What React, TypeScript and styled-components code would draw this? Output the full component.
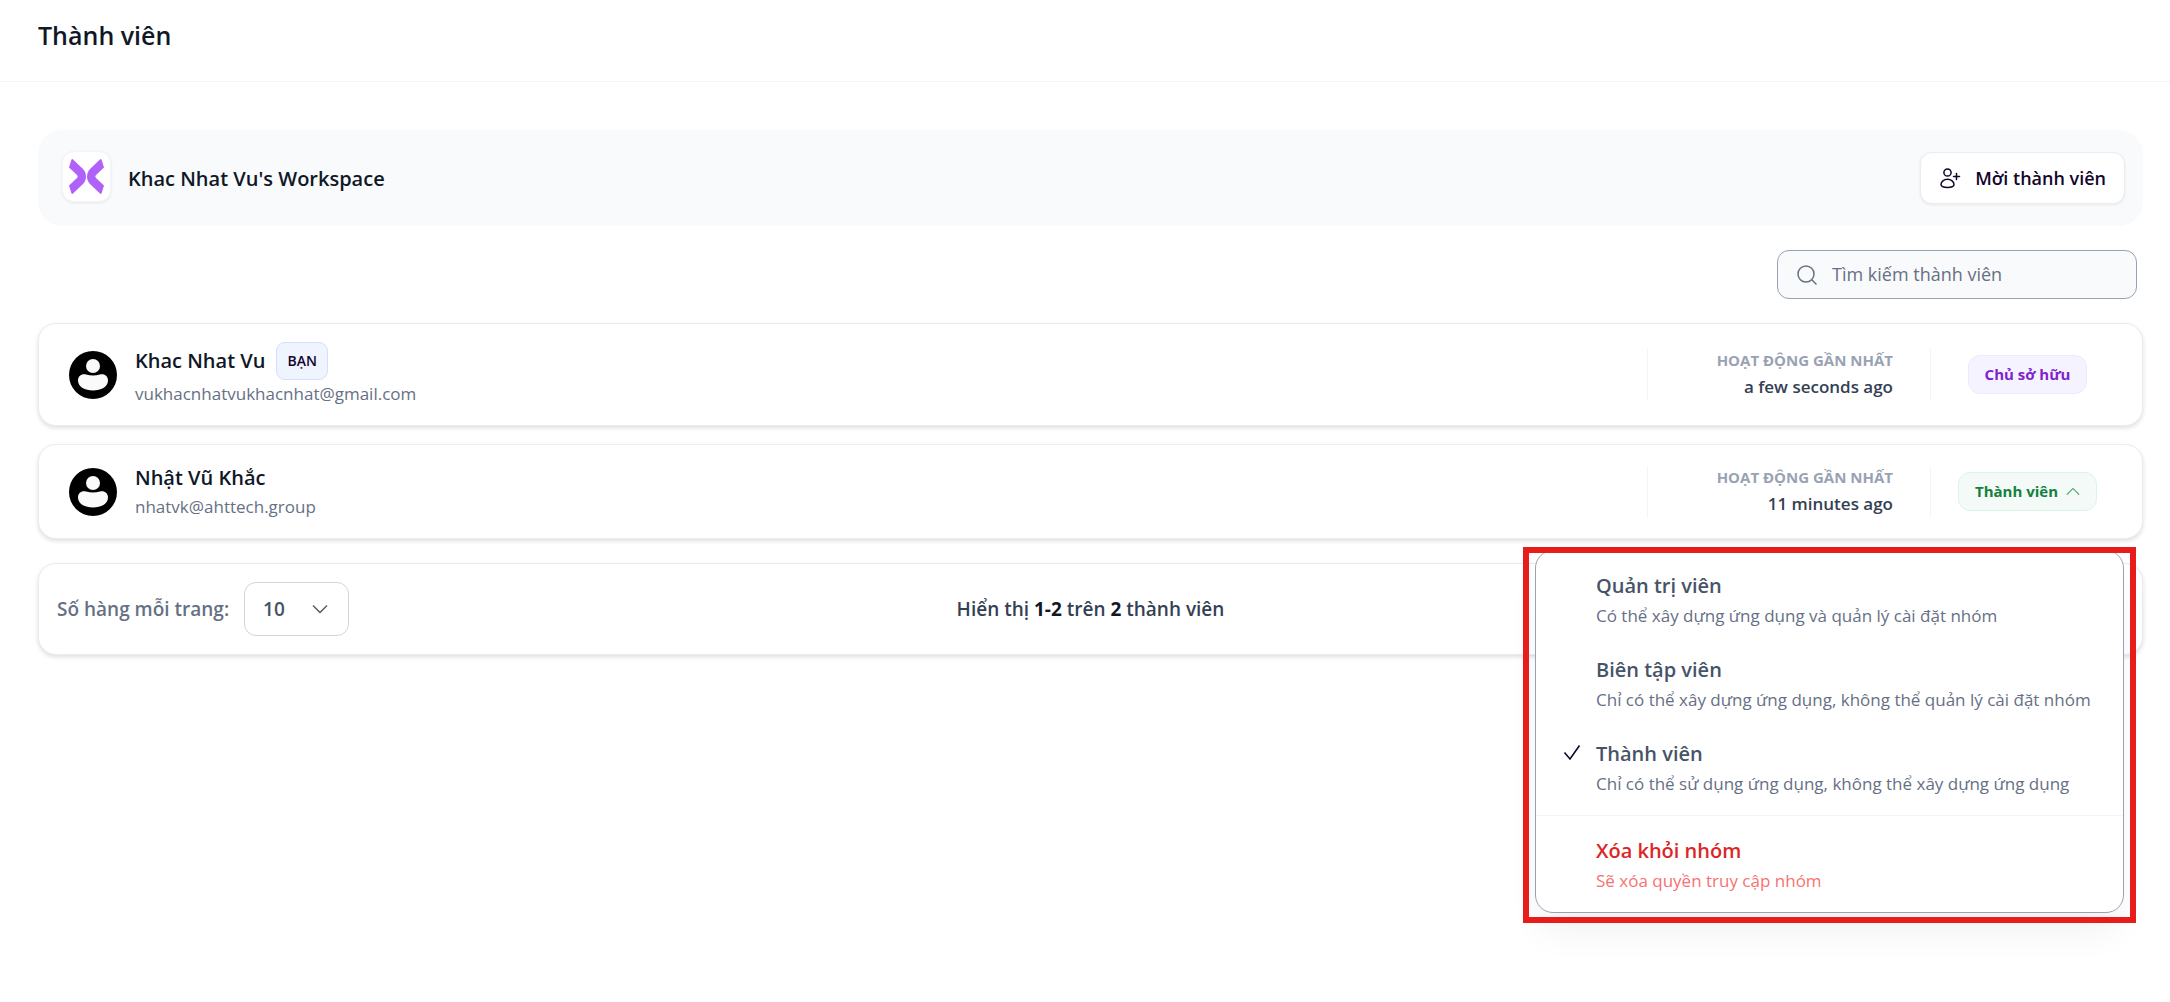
import React from 'react';
import styled, { createGlobalStyle, css } from 'styled-components';

const GlobalStyle = createGlobalStyle`
  *, *::before, *::after { box-sizing: border-box; }
  body {
    margin: 0;
    background: #ffffff;
    color: #101828;
    font-family: 'Open Sans', 'Noto Sans', sans-serif;
    font-size: 17px;
    line-height: 27px;
  }
  button, input, select { font: inherit; color: inherit; margin: 0; }
  h1, h2, p, ul { margin: 0; padding: 0; }
`;

const Page = styled.div`
  min-height: 100vh;
`;

const Header = styled.header`
  padding: 17px 38px 28px;
  border-bottom: 1px solid #f2f4f7;
`;

const Title = styled.h1`
  font-size: 25px;
  line-height: 36px;
  font-weight: 600;
`;

const Main = styled.main`
  padding: 48px 27px 48px 38px;
`;

const Banner = styled.section`
  display: flex;
  align-items: center;
  gap: 17px;
  height: 96px;
  padding: 0 18px 0 24px;
  border-radius: 24px;
  background: #f9fafb;
`;

const LogoBox = styled.span`
  display: flex;
  align-items: center;
  justify-content: center;
  width: 49px;
  height: 51px;
  margin-bottom: 4px;
  border: 1px solid #f2f4f7;
  border-radius: 12px;
  background: #ffffff;
  box-shadow: 0 1px 3px rgba(16, 24, 40, 0.08);
`;

const WorkspaceName = styled.h2`
  flex: 1;
  padding-top: 2px;
  font-size: 20px;
  line-height: 30px;
  font-weight: 600;
`;

const InviteButton = styled.button`
  display: flex;
  align-items: center;
  gap: 14px;
  height: 52px;
  padding: 0 18px;
  border: 1px solid #eaecf0;
  border-radius: 12px;
  background: #ffffff;
  box-shadow: 0 1px 3px rgba(16, 24, 40, 0.08);
  color: #14042b;
  font-size: 18px;
  font-weight: 600;
`;

const SearchLabel = styled.label`
  display: flex;
  align-items: center;
  gap: 14px;
  width: 360px;
  height: 49px;
  margin: 24px 6px 24px auto;
  padding: 0 18px;
  border: 1px solid #98a2b3;
  border-radius: 12px;
  background: #f9fafb;
  color: #667085;
`;

const SearchInput = styled.input`
  flex: 1;
  min-width: 0;
  padding: 0;
  border: 0;
  outline: 0;
  background: transparent;
  font-size: 18px;
  &::placeholder { color: #667085; opacity: 1; }
`;

const cardSurface = css`
  border: 1px solid #eaecf0;
  border-radius: 18px;
  background: #ffffff;
  box-shadow: 0 2px 4px rgba(16, 24, 40, 0.14);
`;

const MemberList = styled.ul`
  display: flex;
  flex-direction: column;
  gap: 18px;
  list-style: none;
`;

const MemberCard = styled.li`
  ${cardSurface}
  position: relative;
  display: flex;
  align-items: center;
  padding: 18px 18px 18px 30px;
`;

const Person = styled.div`
  flex: 1;
  padding-left: 18px;
`;

const NameLine = styled.div`
  display: flex;
  align-items: center;
  gap: 11px;
`;

const Name = styled.span`
  font-size: 20px;
  line-height: 30px;
  font-weight: 600;
`;

const YouTag = styled.span`
  height: 38px;
  padding: 0 10px;
  border: 1px solid #d1e0ff;
  border-radius: 9px;
  background: #eff4ff;
  color: #14042b;
  font-size: 14px;
  line-height: 36px;
  font-weight: 600;
`;

const Email = styled.p`
  color: #667085;
`;

const Activity = styled.div`
  width: 283px;
  height: 52px;
  padding-right: 37px;
  border-left: 1px solid #f2f4f7;
  text-align: right;
`;

const ActivityLabel = styled.p`
  color: #98a2b3;
  font-size: 15px;
  line-height: 22px;
  font-weight: 700;
  text-transform: uppercase;
`;

const ActivityTime = styled.p`
  color: #344054;
  line-height: 32px;
  font-weight: 600;
`;

const RoleCell = styled.div`
  display: flex;
  align-items: center;
  justify-content: center;
  width: 194px;
  height: 52px;
  border-left: 1px solid #f2f4f7;
`;

const rolePill = css`
  display: flex;
  align-items: center;
  gap: 8px;
  height: 39px;
  padding: 0 16px;
  border-radius: 12px;
  font-size: 15px;
  font-weight: 700;
`;

const OwnerPill = styled.span`
  ${rolePill}
  border: 1px solid #ede9fe;
  background: #f5f3ff;
  color: #7e22ce;
`;

const RoleButton = styled.button`
  ${rolePill}
  border: 1px solid #d9f5e8;
  background: #f3faf7;
  color: #15803d;
  & > svg { opacity: 0.75; }
`;

const MenuAnchor = styled.div`
  position: absolute;
  z-index: 2;
  top: calc(100% + 12px);
  right: 18px;
`;

const Menu = styled.div`
  width: 589px;
  border: 1px solid #98a2b3;
  border-radius: 18px;
  background: #ffffff;
  box-shadow: 0 24px 36px -6px rgba(16, 24, 40, 0.06);
`;

const Highlight = styled.div`
  position: absolute;
  inset: -3px -12px -10px;
  border: 6px solid #e91c1c;
  pointer-events: none;
`;

const MenuGroup = styled.div`
  padding: 8px 0 4px;
  & + & { border-top: 1px solid #f2f4f7; }
`;

const MenuItem = styled.button`
  display: grid;
  grid-template-columns: 20px 1fr;
  column-gap: 13px;
  width: 100%;
  padding: 12px 0 12px 27px;
  border: 0;
  background: transparent;
  text-align: left;
`;

const CheckSlot = styled.span`
  display: flex;
  align-items: center;
  height: 30px;
  color: #14042b;
`;

const ItemText = styled.span`
  display: flex;
  flex-direction: column;
  white-space: nowrap;
`;

const ItemTitle = styled.span<{ $danger?: boolean }>`
  color: ${(p) => (p.$danger ? '#dc2626' : '#475467')};
  font-size: 20px;
  line-height: 30px;
  font-weight: 600;
`;

const ItemDescription = styled.span<{ $danger?: boolean }>`
  color: ${(p) => (p.$danger ? '#f87171' : '#667085')};
  line-height: 30px;
`;

const Pager = styled.footer`
  ${cardSurface}
  display: grid;
  grid-template-columns: 1fr auto 1fr;
  align-items: center;
  margin-top: 24px;
  padding: 18px;
  font-size: 19px;
  font-weight: 600;
`;

const PageSize = styled.label`
  display: flex;
  align-items: center;
  gap: 15px;
  color: #667085;
`;

const SelectBox = styled.span`
  display: grid;
  align-items: center;
  color: #475467;
  & > * { grid-area: 1 / 1; }
  & > svg { justify-self: end; margin-right: 21px; pointer-events: none; }
`;

const Select = styled.select`
  width: 105px;
  height: 54px;
  padding: 0 18px;
  border: 1px solid #d0d5dd;
  border-radius: 12px;
  appearance: none;
  background: #ffffff;
`;

const Summary = styled.p`
  color: #344054;
  strong { color: #101828; font-weight: 700; }
`;

const Logo = () => (
  <svg width="35" height="35" viewBox="0 0 35 35" fill="#b061fa" aria-hidden="true">
    <path d="M3.500 0 L13.500 9.500 Q17 13 17 17.500 Q17 22 13.500 25.500 L3.500 35 L2.500 34.500 L0 26.500 L8 19 Q9.500 17.500 8 16 L0 8.500 L2.500 0.500 Z" />
    <path d="M31.500 0 L21.500 9.500 Q18 13 18 17.500 Q18 22 21.500 25.500 L31.500 35 L32.500 34.500 L35 26.500 L27 19 Q25.500 17.500 27 16 L35 8.500 L32.500 0.500 Z" />
  </svg>
);

const InviteIcon = () => (
  <svg width="22" height="22" viewBox="0 0 22 22" fill="none" stroke="currentColor" strokeWidth="1.500" strokeLinecap="round" aria-hidden="true">
    <circle cx="8.500" cy="5.500" r="3.600" />
    <path d="M8.500 12.200c-3.600 0-6.500 2.600-6.500 5.300 0 2 2.500 2.900 6.500 2.900s6.500-.9 6.500-2.900c0-2.700-2.900-5.300-6.500-5.300Z" />
    <path d="M17.500 6.500v6M14.500 9.500h6" />
  </svg>
);

const SearchIcon = () => (
  <svg width="22" height="22" viewBox="0 0 22 22" fill="none" stroke="currentColor" strokeWidth="1.500" aria-hidden="true">
    <circle cx="10" cy="10" r="8" />
    <path d="M15.800 15.800 20.500 20.500" />
  </svg>
);

const Avatar = () => (
  <svg width="48" height="48" viewBox="0 0 48 48" aria-hidden="true">
    <circle cx="24" cy="24" r="24" fill="#000000" />
    <circle cx="24" cy="15" r="7" fill="#fafafa" />
    <path d="M17 23.500 Q24 25.500 31 23.500 C35.500 22.500 39 25 39 29.500 C39 36 32 39.500 24 39.500 C16 39.500 9 36 9 29.500 C9 25 12.500 22.500 17 23.500 Z" fill="#fafafa" />
  </svg>
);

const Chevron = ({ up = false }: { up?: boolean }) => (
  <svg width={up ? 14 : 16} height={up ? 9 : 10} viewBox="0 0 16 10" fill="none" stroke="currentColor" strokeWidth="1.300" aria-hidden="true">
    <path d={up ? 'M1 8.500 8 1.500l7 7' : 'M1 1.500l7 7 7-7'} />
  </svg>
);

const Check = () => (
  <svg width="20" height="20" viewBox="0 0 20 20" fill="none" stroke="currentColor" strokeWidth="1.600" aria-hidden="true">
    <path d="M1.500 8.500 7 15 16.500 1.500" />
  </svg>
);

type Role = { title: string; description: string };

const roles: Role[] = [
  { title: 'Quản trị viên', description: 'Có thể xây dựng ứng dụng và quản lý cài đặt nhóm' },
  { title: 'Biên tập viên', description: 'Chỉ có thể xây dựng ứng dụng, không thể quản lý cài đặt nhóm' },
  { title: 'Thành viên', description: 'Chỉ có thể sử dụng ứng dụng, không thể xây dựng ứng dụng' },
];

const RoleMenu = ({ current }: { current: string }) => (
  <MenuAnchor>
    <Menu role="menu">
      <MenuGroup>
        {roles.map((role) => (
          <MenuItem key={role.title} role="menuitemradio" aria-checked={role.title === current}>
            <CheckSlot>{role.title === current && <Check />}</CheckSlot>
            <ItemText>
              <ItemTitle>{role.title}</ItemTitle>
              <ItemDescription>{role.description}</ItemDescription>
            </ItemText>
          </MenuItem>
        ))}
      </MenuGroup>
      <MenuGroup>
        <MenuItem role="menuitem">
          <CheckSlot />
          <ItemText>
            <ItemTitle $danger>Xóa khỏi nhóm</ItemTitle>
            <ItemDescription $danger>Sẽ xóa quyền truy cập nhóm</ItemDescription>
          </ItemText>
        </MenuItem>
      </MenuGroup>
    </Menu>
    <Highlight />
  </MenuAnchor>
);

type Member = { name: string; email: string; active: string; role: string; you?: boolean };

const members: Member[] = [
  { name: 'Khac Nhat Vu', email: 'vukhacnhatvukhacnhat@gmail.com', active: 'a few seconds ago', role: 'Chủ sở hữu', you: true },
  { name: 'Nhật Vũ Khắc', email: 'nhatvk@ahttech.group', active: '11 minutes ago', role: 'Thành viên' },
];

const MemberRow = ({ member }: { member: Member }) => (
  <MemberCard>
    <Avatar />
    <Person>
      <NameLine>
        <Name>{member.name}</Name>
        {member.you && <YouTag>BẠN</YouTag>}
      </NameLine>
      <Email>{member.email}</Email>
    </Person>
    <Activity>
      <ActivityLabel>Hoạt động gần nhất</ActivityLabel>
      <ActivityTime>{member.active}</ActivityTime>
    </Activity>
    <RoleCell>
      {member.you ? (
        <OwnerPill>{member.role}</OwnerPill>
      ) : (
        <RoleButton aria-haspopup="menu" aria-expanded="true">
          {member.role}
          <Chevron up />
        </RoleButton>
      )}
    </RoleCell>
    {!member.you && <RoleMenu current={member.role} />}
  </MemberCard>
);

export default function App() {
  return (
    <Page>
      <GlobalStyle />
      <Header>
        <Title>Thành viên</Title>
      </Header>
      <Main>
        <Banner>
          <LogoBox><Logo /></LogoBox>
          <WorkspaceName>Khac Nhat Vu's Workspace</WorkspaceName>
          <InviteButton><InviteIcon />Mời thành viên</InviteButton>
        </Banner>
        <SearchLabel>
          <SearchIcon />
          <SearchInput type="search" aria-label="Tìm kiếm thành viên" placeholder="Tìm kiếm thành viên" />
        </SearchLabel>
        <MemberList>
          {members.map((member) => <MemberRow key={member.email} member={member} />)}
        </MemberList>
        <Pager>
          <PageSize>
            Số hàng mỗi trang:
            <SelectBox>
              <Select defaultValue="10">
                <option value="10">10</option>
                <option value="20">20</option>
                <option value="50">50</option>
              </Select>
              <Chevron />
            </SelectBox>
          </PageSize>
          <Summary>Hiển thị <strong>1-2</strong> trên <strong>2</strong> thành viên</Summary>
        </Pager>
      </Main>
    </Page>
  );
}
